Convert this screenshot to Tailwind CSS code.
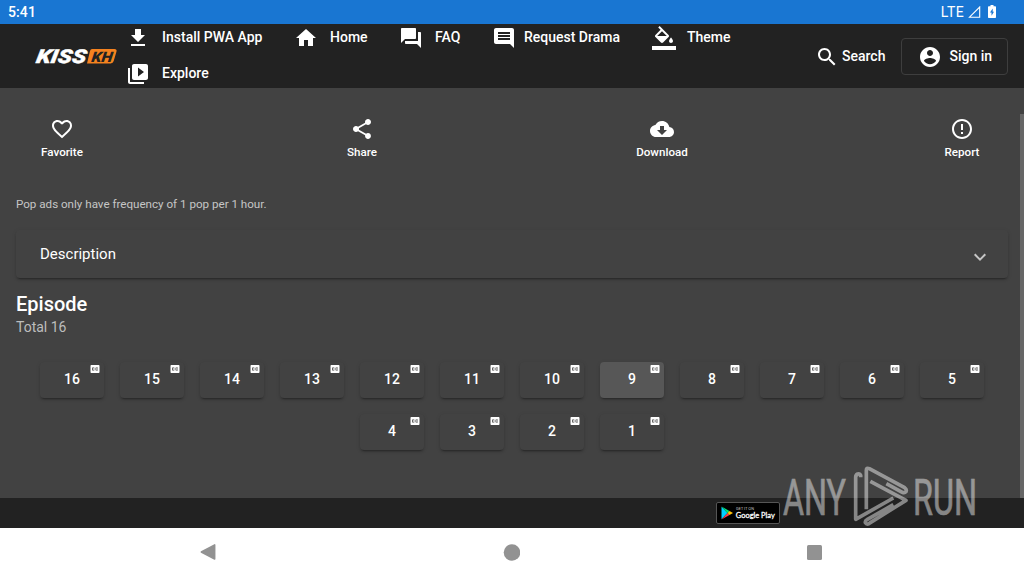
<!DOCTYPE html>
<html lang="en">
<head>
<meta charset="utf-8">
<title>KissKH</title>
<script src="https://cdn.jsdelivr.net/npm/@tailwindcss/browser@4"></script>
</head>
<body class="w-[1024px] h-[576px] overflow-hidden relative flex flex-col bg-[#424242] text-white font-['Roboto',sans-serif] text-sm">
  <!-- Status bar -->
  <div class="h-6 shrink-0 bg-[#1976d2] flex items-center justify-between pl-2 pr-7">
    <span class="font-medium text-sm leading-6 tracking-[0.1px]">5:41</span>
    <div class="flex items-center">
      <span class="text-sm leading-6 tracking-[0.4px]">LTE</span>
      <svg class="w-[13px] h-3 ml-1" viewBox="0 0 13 12" fill="none" stroke="#fff" stroke-width="1.1"><path d="M1.500 11.200H11.700V1z"/></svg>
      <svg class="w-2 h-[13px] ml-[7px] -mt-0.5" viewBox="0 0 8 13"><path fill="#fff" d="M2.500 0h3v1.300H7c.6 0 1 .4 1 1V12c0 .6-.4 1-1 1H1c-.6 0-1-.4-1-1V2.300c0-.6.4-1 1-1h1.500z"/><path fill="#1976d2" d="M4.700 3.500L2 7.600h1.500v3.200L6 6.700H4.700z"/></svg>
    </div>
  </div>

  <!-- Header -->
  <header class="h-16 shrink-0 bg-[#222] flex items-center pl-[34px] pr-4">
    <svg class="w-[84px] h-6 shrink-0" viewBox="0 0 84 24">
      <path fill="#f5821f" d="M58 5h22.500q2.600 0 2 2.600L79.700 17q-.7 2.400-3 2.400H53L56 7q.5-2 2-2z"/>
      <g font-family="Roboto, sans-serif" font-weight="900" font-style="italic">
        <text transform="translate(1.500 19) skewX(-10)" x="0" y="0" font-size="19" fill="#fff" textLength="50" lengthAdjust="spacingAndGlyphs" stroke="#fff" stroke-width=".4">KISS</text>
        <text transform="translate(57 17.500) skewX(-8)" x="0" y="0" font-size="14.500" fill="#222" textLength="21" lengthAdjust="spacingAndGlyphs">KH</text>
      </g>
    </svg>
    <nav class="ml-2 w-[680px] h-[74px] shrink-0 flex flex-wrap content-start font-medium">
      <a class="flex items-center h-9 w-[168px] gap-3"><svg class="size-6 mt-0.5" viewBox="0 0 24 24" fill="#fff"><path d="M19 9h-4V3H9v6H5l7 7 7-7zM5 18v2h14v-2H5z"/></svg>Install PWA App</a>
      <a class="flex items-center h-9 w-[105px] gap-3"><svg class="size-6 mt-0.5" viewBox="0 0 24 24" fill="#fff"><path d="M10 20v-6h4v6h5v-8h3L12 3 2 12h3v8z"/></svg>Home</a>
      <a class="flex items-center h-9 w-[93px] gap-3"><svg class="size-6 mt-0.5" viewBox="0 0 24 24" fill="#fff"><path d="M21 6h-2v9H6v2c0 .55.45 1 1 1h11l4 4V7c0-.55-.45-1-1-1zm-4 6V3c0-.55-.45-1-1-1H3c-.55 0-1 .45-1 1v14l4-4h10c.55 0 1-.45 1-1z"/></svg>FAQ</a>
      <a class="flex items-center h-9 w-[160px] gap-2"><svg class="size-6 mt-0.5" viewBox="0 0 24 24" fill="#fff"><path d="M21.990 4c0-1.100-.89-2-1.990-2H4c-1.100 0-2 .9-2 2v12c0 1.100.9 2 2 2h14l4 4-.01-18zM18 14H6v-2h12v2zm0-3H6V9h12v2zm0-3H6V6h12v2z"/></svg>Request Drama</a>
      <a class="flex items-center h-9 w-[120px] gap-[11px]"><svg class="size-6 mt-0.5" viewBox="0 0 24 24" fill="#fff"><path d="M16.560 8.940L7.620 0 6.210 1.410l2.380 2.380-5.150 5.150c-.59.59-.59 1.540 0 2.120l5.500 5.500c.29.29.68.44 1.060.44s.77-.15 1.060-.44l5.500-5.500c.59-.58.59-1.530 0-2.120zM5.210 10L10 5.210 14.790 10H5.210zM19 11.500s-2 2.170-2 3.500c0 1.100.9 2 2 2s2-.9 2-2c0-1.330-2-3.500-2-3.500zM0 20h24v4H0v-4z"/></svg>Theme</a>
      <a class="flex items-center h-9 w-[168px] gap-3"><svg class="size-6 mt-0.5" viewBox="0 0 24 24" fill="#fff"><path d="M4 6H2v14c0 1.100.9 2 2 2h14v-2H4V6zm16-4H8c-1.100 0-2 .9-2 2v12c0 1.100.9 2 2 2h12c1.100 0 2-.9 2-2V4c0-1.100-.9-2-2-2zm-8 12.500v-9l6 4.500-6 4.500z"/></svg>Explore</a>
    </nav>
    <div class="ml-[9px] flex items-center gap-[3px] font-medium">
      <svg class="size-6 mt-0.5" viewBox="0 0 24 24" fill="#fff"><path d="M15.500 14h-.79l-.28-.27C15.410 12.590 16 11.110 16 9.500 16 5.910 13.090 3 9.500 3S3 5.910 3 9.500 5.910 16 9.500 16c1.610 0 3.090-.59 4.230-1.570l.27.28v.79l5 4.990L20.490 19l-4.990-5zm-6 0C7.010 14 5 11.990 5 9.500S7.010 5 9.500 5 14 7.010 14 9.500 11.990 14 9.500 14z"/></svg>Search
    </div>
    <div class="ml-auto w-[107px] h-[37px] shrink-0 rounded border border-[#3e3e3e] flex items-center pl-[15.500px] gap-2 font-medium whitespace-nowrap">
      <svg class="size-6 mt-0.5 shrink-0" viewBox="0 0 24 24" fill="#fff"><path d="M12 2C6.480 2 2 6.480 2 12s4.480 10 10 10 10-4.480 10-10S17.520 2 12 2zm0 3c1.660 0 3 1.340 3 3s-1.340 3-3 3-3-1.340-3-3 1.340-3 3-3zm0 14.200c-2.500 0-4.710-1.280-6-3.220.03-1.990 4-3.080 6-3.080 1.990 0 5.970 1.090 6 3.080-1.290 1.940-3.500 3.220-6 3.220z"/></svg>Sign in
    </div>
  </header>

  <!-- Content and scrollbar -->
  <div class="flex h-[410px] shrink-0">
    <main class="w-[1020px] pl-4 pr-3">
      <div class="flex justify-between pt-[29px] text-[11.620px] font-medium leading-[15px]">
        <div class="w-[92px] flex flex-col items-center gap-1"><svg class="size-6" viewBox="0 0 24 24" fill="#fff"><path d="M16.500 3c-1.740 0-3.410.81-4.500 2.090C10.910 3.810 9.240 3 7.500 3 4.420 3 2 5.420 2 8.500c0 3.780 3.400 6.860 8.550 11.540L12 21.350l1.450-1.320C18.600 15.360 22 12.280 22 8.500 22 5.420 19.580 3 16.500 3zm-4.400 15.550l-.1.100-.1-.1C7.140 14.240 4 11.390 4 8.500 4 6.500 5.500 5 7.500 5c1.540 0 3.040.99 3.570 2.360h1.870C13.460 5.990 14.960 5 16.500 5c2 0 3.500 1.500 3.500 3.500 0 2.890-3.140 5.740-7.900 10.050z"/></svg>Favorite</div>
        <div class="w-[92px] flex flex-col items-center gap-1"><svg class="size-6" viewBox="0 0 24 24" fill="#fff"><path d="M18 16.080c-.76 0-1.440.3-1.960.77L8.910 12.700c.05-.23.09-.46.09-.7s-.04-.47-.09-.7l7.050-4.110c.54.5 1.250.81 2.040.81 1.660 0 3-1.340 3-3s-1.340-3-3-3-3 1.340-3 3c0 .24.04.47.09.7L8.040 9.810C7.500 9.310 6.790 9 6 9c-1.660 0-3 1.340-3 3s1.340 3 3 3c.79 0 1.500-.31 2.040-.81l7.120 4.160c-.05.21-.08.43-.08.650 0 1.610 1.310 2.920 2.920 2.920s2.920-1.310 2.920-2.920-1.310-2.920-2.920-2.920z"/></svg>Share</div>
        <div class="w-[92px] flex flex-col items-center gap-1"><svg class="size-6" viewBox="0 0 24 24" fill="#fff"><path d="M19.350 10.040C18.670 6.590 15.640 4 12 4 9.110 4 6.600 5.640 5.350 8.040 2.340 8.360 0 10.910 0 14c0 3.310 2.690 6 6 6h13c2.760 0 5-2.240 5-5 0-2.640-2.050-4.780-4.650-4.960zM17 13l-5 5-5-5h3V9h4v4h3z"/></svg>Download</div>
        <div class="w-[92px] flex flex-col items-center gap-1"><svg class="size-6" viewBox="0 0 24 24" fill="#fff"><path d="M11 15h2v2h-2zm0-8h2v6h-2zm.99-5C6.470 2 2 6.480 2 12s4.470 10 9.990 10C17.520 22 22 17.520 22 12S17.520 2 11.990 2zM12 20c-4.420 0-8-3.580-8-8s3.580-8 8-8 8 3.580 8 8-3.580 8-8 8z"/></svg>Report</div>
      </div>

      <p class="mt-9 text-[11.620px] leading-4 text-[#c6c6c6]">Pop ads only have frequency of 1 pop per 1 hour.</p>

      <section class="mt-[18px] h-12 rounded flex items-center justify-between pl-6 pr-4 shadow-[0_3px_1px_-2px_rgba(0,0,0,0.2),0_2px_2px_0_rgba(0,0,0,0.14),0_1px_5px_0_rgba(0,0,0,0.08)]">
        <span class="text-[15px] mt-0.5">Description</span>
        <svg class="size-6 mt-1.5" viewBox="0 0 24 24" fill="none" stroke="#c6c6c6" stroke-width="2"><path d="M6.700 9.300L12 14.600l5.300-5.300"/></svg>
      </section>

      <h2 class="mt-[14px] text-xl leading-6 font-medium">Episode</h2>
      <p class="mt-px text-sm leading-5 text-[#bdbdbd]">Total 16</p>

      <div id="episodes" class="mt-[25px] flex flex-wrap justify-center gap-4 font-medium leading-[34px]"></div>
    </main>
    <div class="w-1 mt-[26px] bg-[#666]"></div>
  </div>

  <!-- Footer -->
  <footer class="h-[30px] shrink-0 bg-[#222] flex items-center pl-[716px]">
    <div class="w-16 h-[22px] rounded-[2px] bg-black border border-[#555] flex items-center pl-1">
      <svg class="w-3 h-[14px] shrink-0" viewBox="0 0 12 14"><path fill="#00d0ff" d="M.5.700L6.500 7l-6 6.300z"/><path fill="#00e676" d="M.5.500L8.500 5l-2 2z"/><path fill="#ff3d47" d="M.5 13.500L6.500 7l2 2z"/><path fill="#ffc107" d="M8.500 5L12 7 8.500 9l-2-2z"/></svg>
      <svg class="w-[42px] h-5 ml-[2px] shrink-0" viewBox="0 0 42 20" fill="#fff" font-family="Lato, sans-serif"><text x="1" y="7" font-size="3.600" textLength="18" fill="#ccc">GET IT ON</text><text x="0.800" y="15" font-size="8.400" stroke="#fff" stroke-width=".3" textLength="39" lengthAdjust="spacingAndGlyphs">Google Play</text></svg>
    </div>
  </footer>

  <!-- Android navigation bar -->
  <div class="h-12 shrink-0 bg-white flex items-center justify-between pl-[200px] pr-[202px]">
    <svg class="size-4" viewBox="0 0 16 16" fill="#929292" stroke="#929292" stroke-width="1.500" stroke-linejoin="round"><path d="M1.300 8L14.700.9v14.200z"/></svg>
    <svg class="size-[17px]" viewBox="0 0 17 17" fill="#929292"><circle cx="9" cy="8.500" r="8.300"/></svg>
    <div class="size-[15px] rounded-[1.500px] bg-[#929292]"></div>
  </div>

  <!-- Watermark -->
  <svg class="absolute left-[776px] top-[462px] w-[210px] h-[68px] opacity-45" viewBox="0 0 630 204" fill="#fff">
    <g font-family="Roboto, sans-serif" font-size="150" font-weight="400" stroke="#fff" stroke-width="2">
      <text x="21" y="160" textLength="189" lengthAdjust="spacingAndGlyphs">ANY</text>
      <text x="411" y="160" textLength="192" lengthAdjust="spacingAndGlyphs">RUN</text>
    </g>
    <g fill="none" stroke="#fff" stroke-width="11" stroke-linejoin="round">
      <path d="M254 46V40Q252 34 245 36Q239 39 239 46V172L352 108"/>
      <path d="M271 142V25Q271 16 280 20L386 77Q393 82 390 89Q386 94 379 91L331 65"/>
      <path d="M283 58L390 115L283 182Q273 191 268 182Q267 176 273 173L352 128"/>
    </g>
  </svg>

  <script>
    document.getElementById('episodes').innerHTML = Array.from({length: 16}, (_, i) => 16 - i).map(n => `
      <div class="relative w-16 h-9 rounded text-center shadow-[0_3px_1px_-2px_rgba(0,0,0,0.2),0_2px_2px_0_rgba(0,0,0,0.14),0_1px_5px_0_rgba(0,0,0,0.08)] ${n === 9 ? 'bg-[#575757]' : 'bg-[#424242]'}">${n}
        <svg class="absolute right-[3px] top-[1px] size-3" viewBox="0 0 24 24" fill="#fff"><path d="M19 4H5c-1.110 0-2 .9-2 2v12c0 1.100.89 2 2 2h14c1.100 0 2-.9 2-2V6c0-1.100-.9-2-2-2zm-8 7H9.500v-.5h-2v3h2V13H11v1c0 .55-.45 1-1 1H7c-.55 0-1-.45-1-1v-4c0-.55.45-1 1-1h3c.55 0 1 .45 1 1v1zm7 0h-1.500v-.5h-2v3h2V13H18v1c0 .55-.45 1-1 1h-3c-.55 0-1-.45-1-1v-4c0-.55.45-1 1-1h3c.55 0 1 .45 1 1v1z"/></svg>
      </div>`).join('');
  </script>
</body>
</html>
